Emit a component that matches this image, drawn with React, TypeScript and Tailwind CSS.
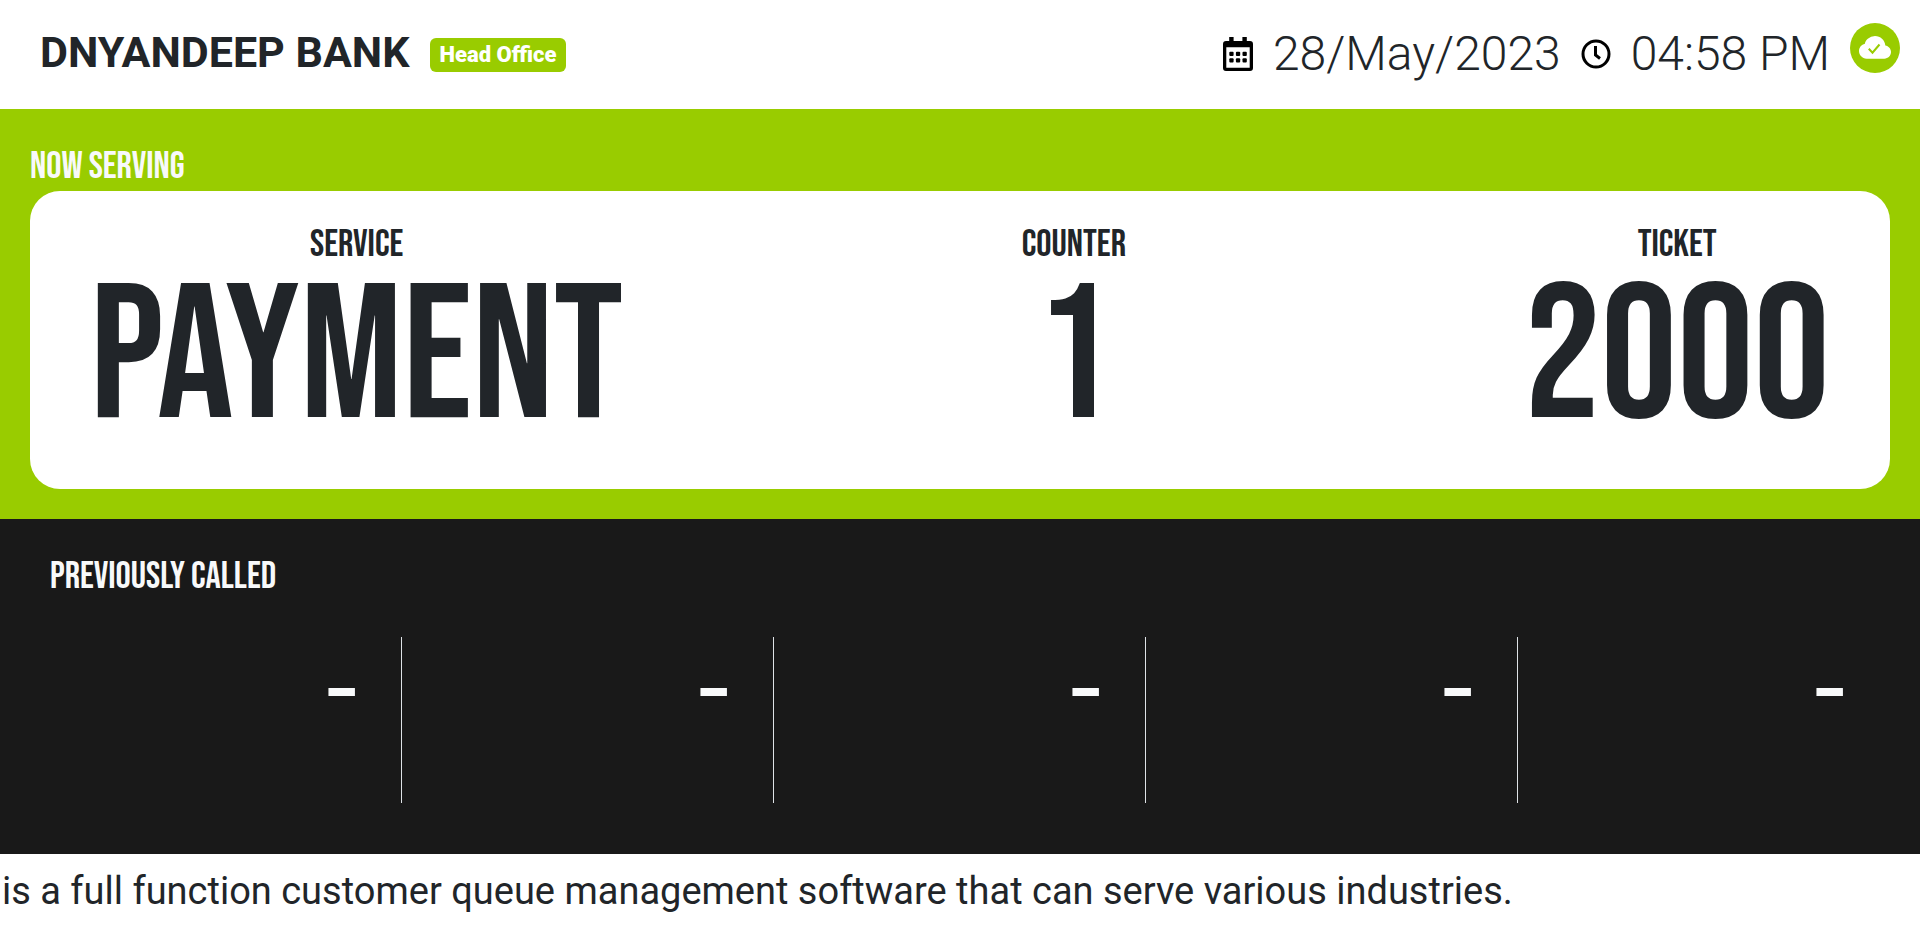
import type { ReactNode } from "react";

const previousTickets = ["–", "–", "–", "–", "–"];

function CalendarIcon() {
  return (
    <svg viewBox="0 0 30 34" className="h-[34px] w-[30px]" aria-hidden="true">
      <path
        fillRule="evenodd"
        fill="#000"
        d="M6.2 0h4.4v4h8.8V0h4.4v4H27a3 3 0 0 1 3 3v24a3 3 0 0 1-3 3H3a3 3 0 0 1-3-3V7a3 3 0 0 1 3-3h3.2zM3.3 10.300v20.400h23.400V10.300z"
      />
      <g fill="#000">
        <rect x="6.3" y="14.8" width="4.3" height="4.3" rx="1" />
        <rect x="12.9" y="14.8" width="4.3" height="4.3" rx="1" />
        <rect x="19.5" y="14.8" width="4.3" height="4.3" rx="1" />
        <rect x="6.3" y="21.3" width="4.3" height="4.3" rx="1" />
        <rect x="12.9" y="21.3" width="4.3" height="4.3" rx="1" />
        <rect x="19.5" y="21.3" width="4.3" height="4.3" rx="1" />
      </g>
    </svg>
  );
}

function ClockIcon() {
  return (
    <svg viewBox="0 0 30 30" className="size-[30px]" fill="none" stroke="#000" strokeWidth="3" aria-hidden="true">
      <circle cx="15" cy="15" r="13" />
      <path d="M14.5 7v9l4.5 3.5" />
    </svg>
  );
}

function CloudDoneIcon() {
  return (
    <svg viewBox="0 0 32 23" className="h-[23px] w-8" aria-hidden="true">
      <path
        fill="#fff"
        transform="translate(0 -4) scale(2 2.05)"
        d="M4.406 3.342A5.53 5.53 0 0 1 8 2c2.69 0 4.923 2 5.166 4.579C14.758 6.804 16 8.137 16 9.773 16 11.569 14.502 13 12.687 13H3.781C1.708 13 0 11.366 0 9.318c0-1.763 1.266-3.223 2.942-3.593.143-.863.698-1.723 1.464-2.383z"
      />
      <path d="M9.8 12.8l3.7 3.9 7-8.2" fill="none" stroke="#99cc00" strokeWidth="2" />
    </svg>
  );
}

function Heading({ children }: { children: ReactNode }) {
  return <h2 className="text-[38px] leading-12 text-[#f8f9fa]">{children}</h2>;
}

function Stat({ label, value }: { label: string; value: string }) {
  return (
    <div className="text-center">
      <dt className="text-[38px] leading-12">{label}</dt>
      <dd className="mt-3 text-[191px] leading-[158px]">{value}</dd>
    </div>
  );
}

export default function App() {
  return (
    <div className="flex min-h-screen flex-col overflow-hidden bg-white font-['Roboto',sans-serif] text-[#212529]">
      <header className="flex h-[109px] items-center justify-between pr-5 pb-0.5 pl-10">
        <div className="flex items-center gap-5 pt-0.5">
          <h1 className="pb-1.5 text-[43px] leading-[52px] font-bold">DNYANDEEP BANK</h1>
          <span className="rounded-md bg-[#99cc00] px-2.5 py-1 text-[22px] leading-[26px] font-black text-white">
            Head Office
          </span>
        </div>
        <div className="flex items-center gap-5 text-5xl leading-14 font-light">
          <CalendarIcon />
          <time>28/May/2023</time>
          <ClockIcon />
          <time>04:58 PM</time>
          <span className="mb-3 flex size-[50px] items-center justify-center rounded-full bg-[#99cc00]">
            <CloudDoneIcon />
          </span>
        </div>
      </header>

      <main className="font-['Bebas_Neue','Roboto_Condensed',sans-serif]">
        <section className="bg-[#99cc00] px-[30px] pt-[34px] pb-[30px]">
          <Heading>NOW SERVING</Heading>
          <dl className="flex justify-between rounded-[30px] bg-white px-15 pt-[30px] pb-[50px]">
            <Stat label="SERVICE" value="PAYMENT" />
            <Stat label="COUNTER" value="1" />
            <Stat label="TICKET" value="2000" />
          </dl>
        </section>

        <section className="bg-[#191919] px-[30px] pt-[34px] pb-[51px]">
          <div className="pl-5">
            <Heading>PREVIOUSLY CALLED</Heading>
          </div>
          <ul className="mt-9 grid grid-cols-5">
            {previousTickets.map((ticket, i) => (
              <li
                key={i}
                className="h-[166px] border-r border-[#dee2e6] pt-3 pr-[46px] text-right text-[88px] leading-24 text-[#f8f9fa] last:border-transparent"
              >
                {ticket}
              </li>
            ))}
          </ul>
        </section>
      </main>

      <footer className="flex flex-1 items-center">
        <p className="pl-0.5 text-[38px] leading-[74px] whitespace-nowrap">
          is a full function customer queue management software that can serve various industries.
        </p>
      </footer>
    </div>
  );
}
